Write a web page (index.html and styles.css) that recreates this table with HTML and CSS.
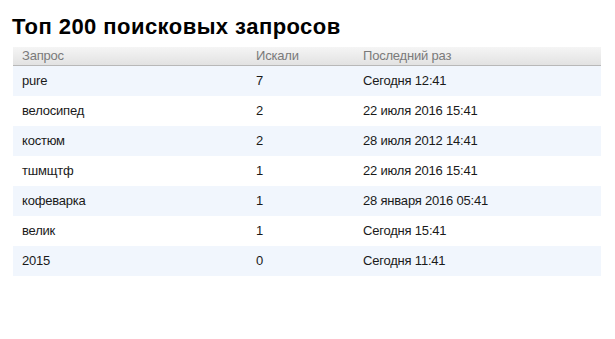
FILE: index.html
```html
<!DOCTYPE html>
<html lang="ru">
<head>
<meta charset="utf-8">
<link rel="stylesheet" href="styles.css">
</head>
<body>
<div class="page">
  <h1 class="title">Топ 200 поисковых запросов</h1>
  <table class="queries">
    <thead>
      <tr><th class="c1">Запрос</th><th class="c2">Искали</th><th class="c3">Последний раз</th></tr>
    </thead>
    <tbody>
      <tr class="odd"><td>pure</td><td>7</td><td>Сегодня 12:41</td></tr>
      <tr><td>велосипед</td><td>2</td><td>22 июля 2016 15:41</td></tr>
      <tr class="odd"><td>костюм</td><td>2</td><td>28 июля 2012 14:41</td></tr>
      <tr><td>тшмщтф</td><td>1</td><td>22 июля 2016 15:41</td></tr>
      <tr class="odd"><td>кофеварка</td><td>1</td><td>28 января 2016 05:41</td></tr>
      <tr><td>велик</td><td>1</td><td>Сегодня 15:41</td></tr>
      <tr class="odd"><td>2015</td><td>0</td><td>Сегодня 11:41</td></tr>
    </tbody>
  </table>
</div>
</body>
</html>
```
FILE: styles.css
```css
html, body {
  margin: 0;
  padding: 0;
  background: #ffffff;
}
.page {
  padding: 12px 14px 0 13px;
  font-family: "Liberation Sans", Arial, sans-serif;
  color: #111;
}
.title {
  margin: 0 0 6px -1px;
  font-size: 22px;
  line-height: 29px;
  font-weight: bold;
  color: #000;
  letter-spacing: 0.45px;
}
.queries {
  width: 588px;
  border-collapse: collapse;
  font-size: 13px;
  letter-spacing: -0.2px;
}
.queries th {
  text-align: left;
  font-weight: normal;
  color: #7a7a7a;
  height: 18px;
  padding: 0 9px;
  background: linear-gradient(#f5f5f5, #e2e2e2);
  border-bottom: 1px solid #b8b8b8;
  line-height: 18px;
}
.queries .c1 { width: 216px; }
.queries .c2 { width: 89px; }
.queries td {
  height: 30px;
  padding: 0 9px;
  line-height: 30px;
  color: #1a1a1a;
}
.queries tr.odd td {
  background: #f1f6fd;
}
```
